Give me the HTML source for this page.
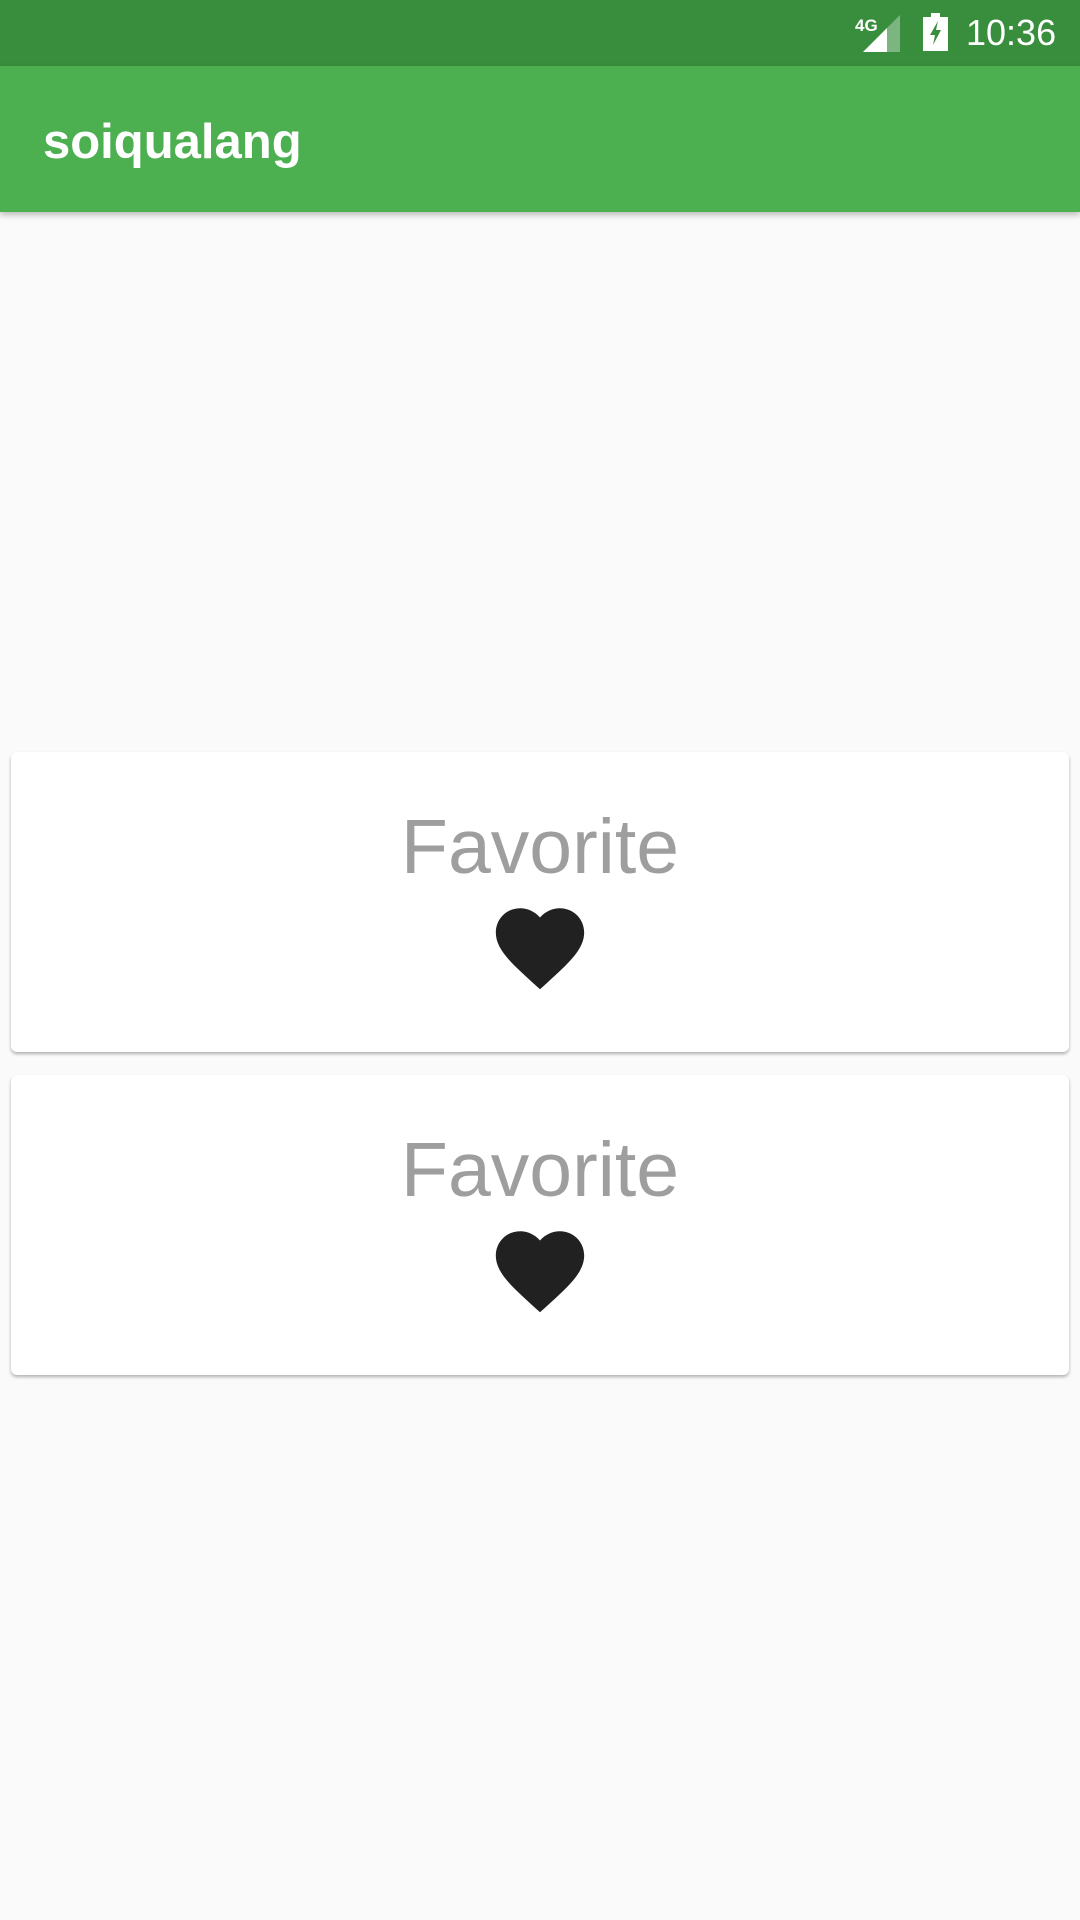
<!DOCTYPE html>
<html><head><meta charset="utf-8"><style>
*{margin:0;padding:0;box-sizing:border-box}
body{width:1080px;height:1920px;background:#fafafa;position:relative;overflow:hidden;font-family:"Liberation Sans",sans-serif}
.sb{position:absolute;left:0;top:0;width:1080px;height:66px;background:#388e3c}
.ab{position:absolute;left:0;top:66px;width:1080px;height:146px;background:#4caf50;box-shadow:0 3px 6px rgba(0,0,0,.25)}
.title{position:absolute;left:43px;top:114px;font-size:49px;font-weight:bold;color:#fff;line-height:56px}
.card{position:absolute;left:11px;width:1058px;height:300px;background:#fff;border-radius:6px;box-shadow:0 2px 3px rgba(0,0,0,.3)}
.fav{position:absolute;left:0;width:100%;text-align:center;font-size:77px;color:#9e9e9e;line-height:1}
.heart{position:absolute;left:476px;width:106px;height:106px}
</style></head><body>
<div class="sb">
<div style="position:absolute;left:855px;top:16px;font-size:17px;font-weight:bold;color:#fff">4G</div>
<svg style="position:absolute;left:863px;top:15px" width="37" height="37" viewBox="0 0 37 37"><path d="M37 0V37H0Z" fill="rgba(255,255,255,.35)"/><path d="M24 13V37H0Z" fill="#fff"/></svg>
<svg style="position:absolute;left:923px;top:13px" width="25" height="38" viewBox="0 0 25 38"><path d="M8 0H17V4H25V38H0V4H8Z" fill="#fff"/><path d="M15 8L7 22H12L10 32L18 17H13Z" fill="#388e3c"/></svg>
<div style="position:absolute;left:966px;top:12px;font-size:36px;color:#fff">10:36</div>
</div>
<div class="ab"></div>
<div class="title">soiqualang</div>
<div class="card" style="top:752px">
<div class="fav" style="top:57px">Favorite</div>
<svg class="heart" style="top:143px" viewBox="0 0 24 24"><path fill="#212121" d="M12 21.35l-1.45-1.32C5.4 15.36 2 12.28 2 8.5 2 5.42 4.42 3 7.5 3c1.74 0 3.41.81 4.5 2.09C13.09 3.81 14.76 3 16.5 3 19.58 3 22 5.42 22 8.5c0 3.78-3.4 6.86-8.55 11.54L12 21.35z"/></svg>
</div>
<div class="card" style="top:1075px">
<div class="fav" style="top:57px">Favorite</div>
<svg class="heart" style="top:143px" viewBox="0 0 24 24"><path fill="#212121" d="M12 21.35l-1.45-1.32C5.4 15.36 2 12.28 2 8.5 2 5.42 4.42 3 7.5 3c1.74 0 3.41.81 4.5 2.09C13.09 3.81 14.76 3 16.5 3 19.58 3 22 5.42 22 8.5c0 3.78-3.4 6.86-8.55 11.54L12 21.35z"/></svg>
</div>
</body></html>
